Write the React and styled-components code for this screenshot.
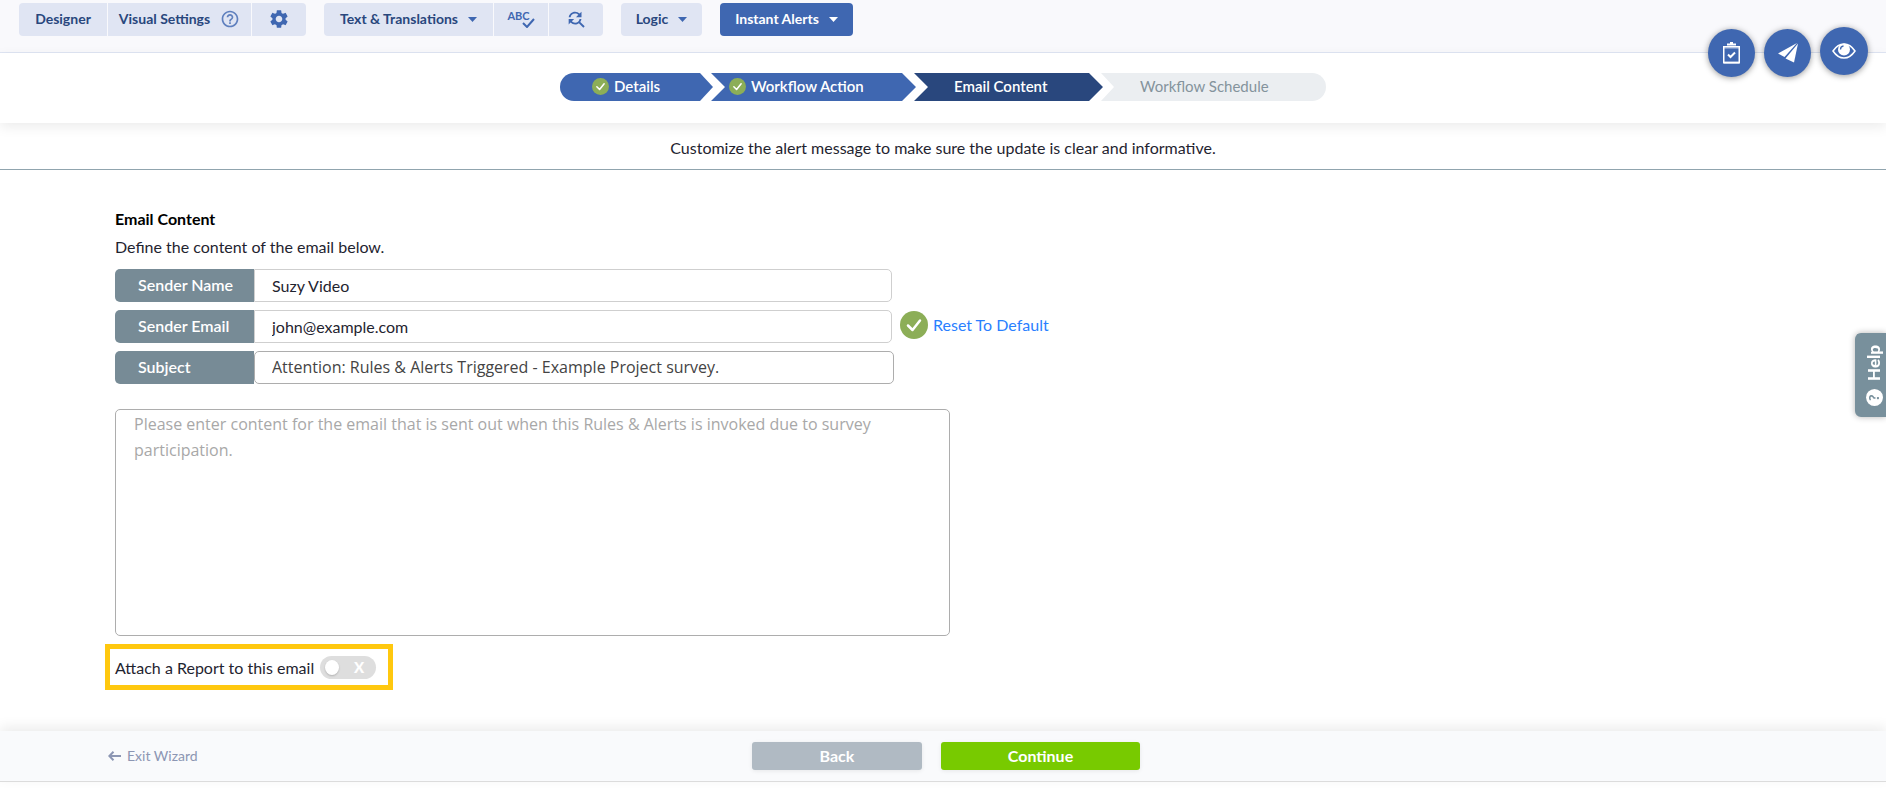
import { useState } from 'react'
import styled, { createGlobalStyle } from 'styled-components'
import { MdSettings, MdFindReplace, MdHelpOutline } from 'react-icons/md'

const colors = {
  primary: '#3f67b1',
  primaryDark: '#29477d',
  primaryLight: '#e0e5f3',
  slate: '#778b96',
  green: '#8cae57',
  line: '#dfe5f3',
  text: '#1f2430',
}

const GlobalStyle = createGlobalStyle`
  * {
    box-sizing: border-box;
  }
  body {
    margin: 0;
    background-color: white;
    color: ${colors.text};
    font-family: Lato, 'Liberation Sans', sans-serif;
    font-size: 16px;
    line-height: 20px;
  }
  button, input, textarea {
    font: inherit;
    color: inherit;
    margin: 0;
  }
  a {
    text-decoration: none;
  }
`

const Page = styled.div`
  position: relative;
  display: flex;
  flex-direction: column;
  min-height: 100vh;
`

const Toolbar = styled.header`
  display: flex;
  align-items: flex-start;
  gap: 18px;
  height: 53px;
  padding: 3px 19px 0;
  background-color: #f9f9fc;
  border-bottom: 1px solid ${colors.line};
`

const ToolGroup = styled.div`
  display: flex;
  gap: 1px;
  border-radius: 4px;
  overflow: hidden;
`

const ToolButton = styled.button`
  display: flex;
  align-items: center;
  justify-content: center;
  gap: 10px;
  width: ${({ $width }) => $width}px;
  height: 33px;
  padding: 0 0 1px;
  border: 0;
  font-size: 14px;
  font-weight: 700;
  white-space: nowrap;
  color: ${({ $active }) => ($active ? 'white' : colors.primaryDark)};
  background-color: ${({ $active }) => ($active ? colors.primary : colors.primaryLight)};
  svg {
    color: ${({ $active }) => ($active ? 'white' : colors.primary)};
  }
`

const Abc = styled.span`
  display: flex;
  align-items: flex-start;
  font-size: 11px;
  line-height: 12px;
  color: ${colors.primary};
  svg {
    margin: 8px 0 0 -8px;
  }
`

const Shortcuts = styled.div`
  position: absolute;
  top: 25px;
  right: 18px;
  display: flex;
  align-items: center;
  gap: 9px;
`

const RoundButton = styled.button`
  display: flex;
  align-items: center;
  justify-content: center;
  width: ${({ $raised }) => ($raised ? 48 : 47)}px;
  height: 48px;
  margin-top: ${({ $raised }) => ($raised ? 0 : 4)}px;
  padding: 0;
  border: 0;
  border-radius: 50%;
  background-color: ${colors.primary};
  box-shadow: 0 1px 6px rgba(0, 0, 0, 0.4);
`

const StepBar = styled.nav`
  position: relative;
  padding: 20px 0 22px;
  background-color: white;
  box-shadow: 0 4px 12px rgba(0, 0, 0, 0.08);
`

const Steps = styled.ol`
  display: flex;
  justify-content: center;
  margin: 0;
  padding: 0;
  list-style: none;
`

const stepColors = {
  done: colors.primary,
  current: colors.primaryDark,
  next: '#ebeef1',
}

const arrows = {
  first: 'polygon(0 0, calc(100% - 13px) 0, 100% 50%, calc(100% - 13px) 100%, 0 100%)',
  middle:
    'polygon(0 0, calc(100% - 14px) 0, 100% 50%, calc(100% - 14px) 100%, 0 100%, 14px 50%)',
  last: 'polygon(0 0, 100% 0, 100% 100%, 0 100%, 13px 50%)',
}

const Step = styled.li`
  display: flex;
  align-items: center;
  gap: 5px;
  width: ${({ $width }) => $width}px;
  height: 28px;
  padding: 0 0 2px ${({ $indent }) => $indent}px;
  font-size: 15px;
  color: ${({ $status }) => ($status === 'next' ? '#84939c' : 'white')};
  font-weight: ${({ $status }) => ($status === 'next' ? 400 : 600)};
  background-color: ${({ $status }) => stepColors[$status]};
  clip-path: ${({ $shape }) => arrows[$shape]};
  white-space: nowrap;
  &:first-child {
    border-radius: 14px 0 0 14px;
  }
  &:last-child {
    border-radius: 0 14px 14px 0;
  }
  & + & {
    margin-left: -2px;
  }
`

const Intro = styled.p`
  margin: 0;
  padding: 15px 0 11px;
  text-align: center;
  border-bottom: 1px solid #90a4ae;
`

const Main = styled.main`
  flex: 1;
  padding: 39px 115px 40px;
`

const Title = styled.h1`
  margin: 0 0 8px;
  font-size: 16px;
  font-weight: 700;
  color: black;
`

const Description = styled.p`
  margin: 0 0 12px;
`

const Field = styled.div`
  display: flex;
  align-items: flex-start;
  margin-bottom: 8px;
`

const FieldLabel = styled.label`
  width: 139px;
  height: 33px;
  padding-left: 23px;
  line-height: 32px;
  font-weight: 600;
  color: white;
  background-color: ${colors.slate};
  border-radius: 5px 0 0 5px;
`

const TextInput = styled.input`
  flex: 0 1 638px;
  min-width: 0;
  height: 33px;
  padding: 0 17px 1px;
  background-color: white;
  border: 1px solid #cfcfcf;
  border-radius: 0 5px 5px 0;
  outline: 0;
`

const SubjectInput = styled(TextInput)`
  flex-basis: 640px;
  padding-bottom: 2px;
  font-family: 'Open Sans', sans-serif;
  color: #444;
  border-color: #adadad;
  border-radius: 5px;
`

const ResetLink = styled.a`
  display: flex;
  align-items: center;
  gap: 5px;
  margin: 1px 0 0 8px;
  color: #2a7fff;
`

const Message = styled.textarea`
  display: block;
  width: 100%;
  max-width: 835px;
  height: 227px;
  margin-top: 25px;
  padding: 1px 18px;
  font-family: 'Open Sans', sans-serif;
  line-height: 26px;
  border: 1px solid #adadad;
  border-radius: 5px;
  resize: none;
  outline: 0;
  &::placeholder {
    color: #a8a8a8;
  }
`

const Highlight = styled.div`
  width: fit-content;
  margin: 8px 0 0 -10px;
  padding: 7px 12px 6px 5px;
  border: 5px solid #ffc80f;
`

const SwitchLabel = styled.label`
  display: flex;
  align-items: center;
  gap: 6px;
`

const SwitchBox = styled.span`
  position: relative;
  display: block;
  height: 23px;
`

const SwitchInput = styled.input`
  appearance: none;
  display: block;
  width: 56px;
  height: 23px;
  padding: 4px 5px;
  border-radius: 12px;
  background-color: #dedede;
  &:checked {
    padding-left: 37px;
    background-color: ${colors.green};
  }
  &:before {
    content: '';
    display: block;
    width: 14px;
    height: 15px;
    border-radius: 50%;
    background-color: white;
    box-shadow: 0 1px 2px rgba(0, 0, 0, 0.2);
  }
`

const SwitchMark = styled.span`
  position: absolute;
  top: 1px;
  right: 12px;
  font-size: 15px;
  font-weight: 900;
  color: white;
  pointer-events: none;
`

const Footer = styled.footer`
  display: grid;
  grid-template-columns: 1fr auto 1fr;
  align-items: center;
  height: 51px;
  margin-bottom: 6px;
  padding-left: 6px;
  background-color: #f9fafc;
  border-bottom: 1px solid #dcdcdc;
  box-shadow: 0 -4px 12px rgba(0, 0, 0, 0.08);
`

const ExitLink = styled.a`
  display: flex;
  align-items: center;
  gap: 6px;
  padding-left: 102px;
  font-size: 14px;
  color: #8c96b3;
`

const FooterButtons = styled.div`
  display: flex;
  gap: 19px;
`

const FooterButton = styled.button`
  width: ${({ $primary }) => ($primary ? 199 : 170)}px;
  height: 28px;
  padding: 0;
  border: 0;
  border-radius: 3px;
  font-weight: 700;
  color: white;
  background-color: ${({ $primary }) => ($primary ? '#78ca00' : '#b0bac3')};
  box-shadow: 0 1px 4px rgba(0, 0, 0, 0.08);
`

const HelpTab = styled.button`
  position: fixed;
  top: 333px;
  right: 0;
  display: flex;
  align-items: center;
  gap: 8px;
  width: 31px;
  height: 84px;
  padding: 11px 8px 11px 0;
  border: 0;
  border-radius: 0 6px 6px 0;
  writing-mode: vertical-rl;
  transform: rotate(180deg);
  font-size: 17px;
  font-weight: 900;
  color: white;
  background-color: #78909c;
  box-shadow: 0 0 6px rgba(0, 0, 0, 0.3);
`

const HelpMark = styled.span`
  display: flex;
  flex-shrink: 0;
  align-items: center;
  justify-content: center;
  width: 17px;
  height: 17px;
  border-radius: 50%;
  font-size: 14px;
  color: #78909c;
  background-color: white;
`

function Check({ size }) {
  return (
    <svg width={size} height={size} viewBox="0 0 28 28" aria-hidden="true">
      <circle cx="14" cy="14" r="14" fill={colors.green} />
      <path
        d="M8 14.5l4.5 4.5 7.5-9.5"
        fill="none"
        stroke="white"
        strokeWidth="2.5"
        strokeLinecap="round"
        strokeLinejoin="round"
      />
    </svg>
  )
}

function Caret() {
  return (
    <svg width="9" height="5" viewBox="0 0 9 5" aria-hidden="true">
      <path d="M0 0h9L4.5 5z" fill="currentColor" />
    </svg>
  )
}

const steps = [
  { name: 'Details', status: 'done', shape: 'first', width: 153, indent: 32 },
  { name: 'Workflow Action', status: 'done', shape: 'middle', width: 205, indent: 18 },
  { name: 'Email Content', status: 'current', shape: 'middle', width: 189, indent: 40 },
  { name: 'Workflow Schedule', status: 'next', shape: 'last', width: 225, indent: 39 },
]

function App() {
  const [attach, setAttach] = useState(false)

  return (
    <Page>
      <GlobalStyle />
      <Toolbar>
        <ToolGroup>
          <ToolButton $width={88}>Designer</ToolButton>
          <ToolButton $width={143}>
            Visual Settings
            <MdHelpOutline size={20} opacity={0.8} />
          </ToolButton>
          <ToolButton $width={54} aria-label="Settings">
            <MdSettings size={22} />
          </ToolButton>
        </ToolGroup>
        <ToolGroup>
          <ToolButton $width={169}>
            Text &amp; Translations
            <Caret />
          </ToolButton>
          <ToolButton $width={54}>
            <Abc>
              ABC
              <svg width="13" height="10" viewBox="0 0 13 10" aria-hidden="true">
                <path d="M1 5l4 4 7-8" fill="none" stroke="currentColor" strokeWidth="2" />
              </svg>
            </Abc>
          </ToolButton>
          <ToolButton $width={54} aria-label="Find and replace">
            <MdFindReplace size={22} />
          </ToolButton>
        </ToolGroup>
        <ToolGroup>
          <ToolButton $width={81}>
            Logic
            <Caret />
          </ToolButton>
        </ToolGroup>
        <ToolGroup>
          <ToolButton $width={133} $active>
            Instant Alerts
            <Caret />
          </ToolButton>
        </ToolGroup>
      </Toolbar>

      <StepBar>
        <Steps>
          {steps.map(({ name, status, shape, width, indent }) => (
            <Step key={name} $status={status} $shape={shape} $width={width} $indent={indent}>
              {status === 'done' && <Check size={17} />}
              {name}
            </Step>
          ))}
        </Steps>
      </StepBar>
      <Intro>Customize the alert message to make sure the update is clear and informative.</Intro>

      <Main>
        <Title>Email Content</Title>
        <Description>Define the content of the email below.</Description>
        <Field>
          <FieldLabel htmlFor="sender-name">Sender Name</FieldLabel>
          <TextInput id="sender-name" defaultValue="Suzy Video" />
        </Field>
        <Field>
          <FieldLabel htmlFor="sender-email">Sender Email</FieldLabel>
          <TextInput id="sender-email" type="email" defaultValue="john@example.com" />
          <ResetLink href="#reset">
            <Check size={28} />
            Reset To Default
          </ResetLink>
        </Field>
        <Field>
          <FieldLabel htmlFor="subject">Subject</FieldLabel>
          <SubjectInput
            id="subject"
            defaultValue="Attention: Rules & Alerts Triggered - Example Project survey."
          />
        </Field>
        <Message
          aria-label="Email body"
          placeholder="Please enter content for the email that is sent out when this Rules & Alerts is invoked due to survey participation."
        />
        <Highlight>
          <SwitchLabel>
            Attach a Report to this email
            <SwitchBox>
              <SwitchInput
                type="checkbox"
                checked={attach}
                onChange={(e) => setAttach(e.target.checked)}
              />
              {!attach && <SwitchMark>X</SwitchMark>}
            </SwitchBox>
          </SwitchLabel>
        </Highlight>
      </Main>

      <Footer>
        <ExitLink href="#exit">
          <svg width="13" height="10" viewBox="0 0 13 10" aria-hidden="true">
            <path d="M13 5H1.5M5.5 .8L1.3 5l4.2 4.2" fill="none" stroke="currentColor" strokeWidth="2" />
          </svg>
          Exit Wizard
        </ExitLink>
        <FooterButtons>
          <FooterButton>Back</FooterButton>
          <FooterButton $primary>Continue</FooterButton>
        </FooterButtons>
      </Footer>

      <Shortcuts>
        <RoundButton aria-label="Checklist">
          <svg width="17" height="22" viewBox="0 0 17 22" fill="none" stroke="white">
            <path d="M4 2.5h9" strokeWidth="2" />
            <path d="M7 1h3" strokeWidth="2" />
            <path d="M.75 4.75h15.5v16H.75z" strokeWidth="1.5" />
            <path d="M1 6h15" strokeWidth="1" opacity="0.6" />
            <path d="M1 20.5h15" strokeWidth="2" opacity="0.8" />
            <path d="M5 12.5l2.5 2.500 4.500-4.500" strokeWidth="2" />
          </svg>
        </RoundButton>
        <RoundButton aria-label="Send">
          <svg width="20" height="20" viewBox="0 0 20 20" fill="white">
            <path d="M19 0L0 10.5l6.5 3.500z" />
            <path d="M20 .5l-4 19-8.500-4z" />
          </svg>
        </RoundButton>
        <RoundButton aria-label="Preview" $raised>
          <svg width="24" height="16" viewBox="0 0 24 16">
            <path
              d="M1 8C4 3.5 7.5 1 12 1s8 2.5 11 7c-3 4.5-6.5 7-11 7S4 12.5 1 8z"
              fill="none"
              stroke="white"
              strokeWidth="1.5"
            />
            <circle cx="12" cy="6.5" r="6" fill="white" />
            <path d="M8.5 6.5c0-2 1-3.300 3-3.500" fill="none" stroke={colors.primary} strokeWidth="1.3" />
          </svg>
        </RoundButton>
      </Shortcuts>

      <HelpTab>
        <HelpMark>?</HelpMark>
        Help
      </HelpTab>
    </Page>
  )
}

export default App
